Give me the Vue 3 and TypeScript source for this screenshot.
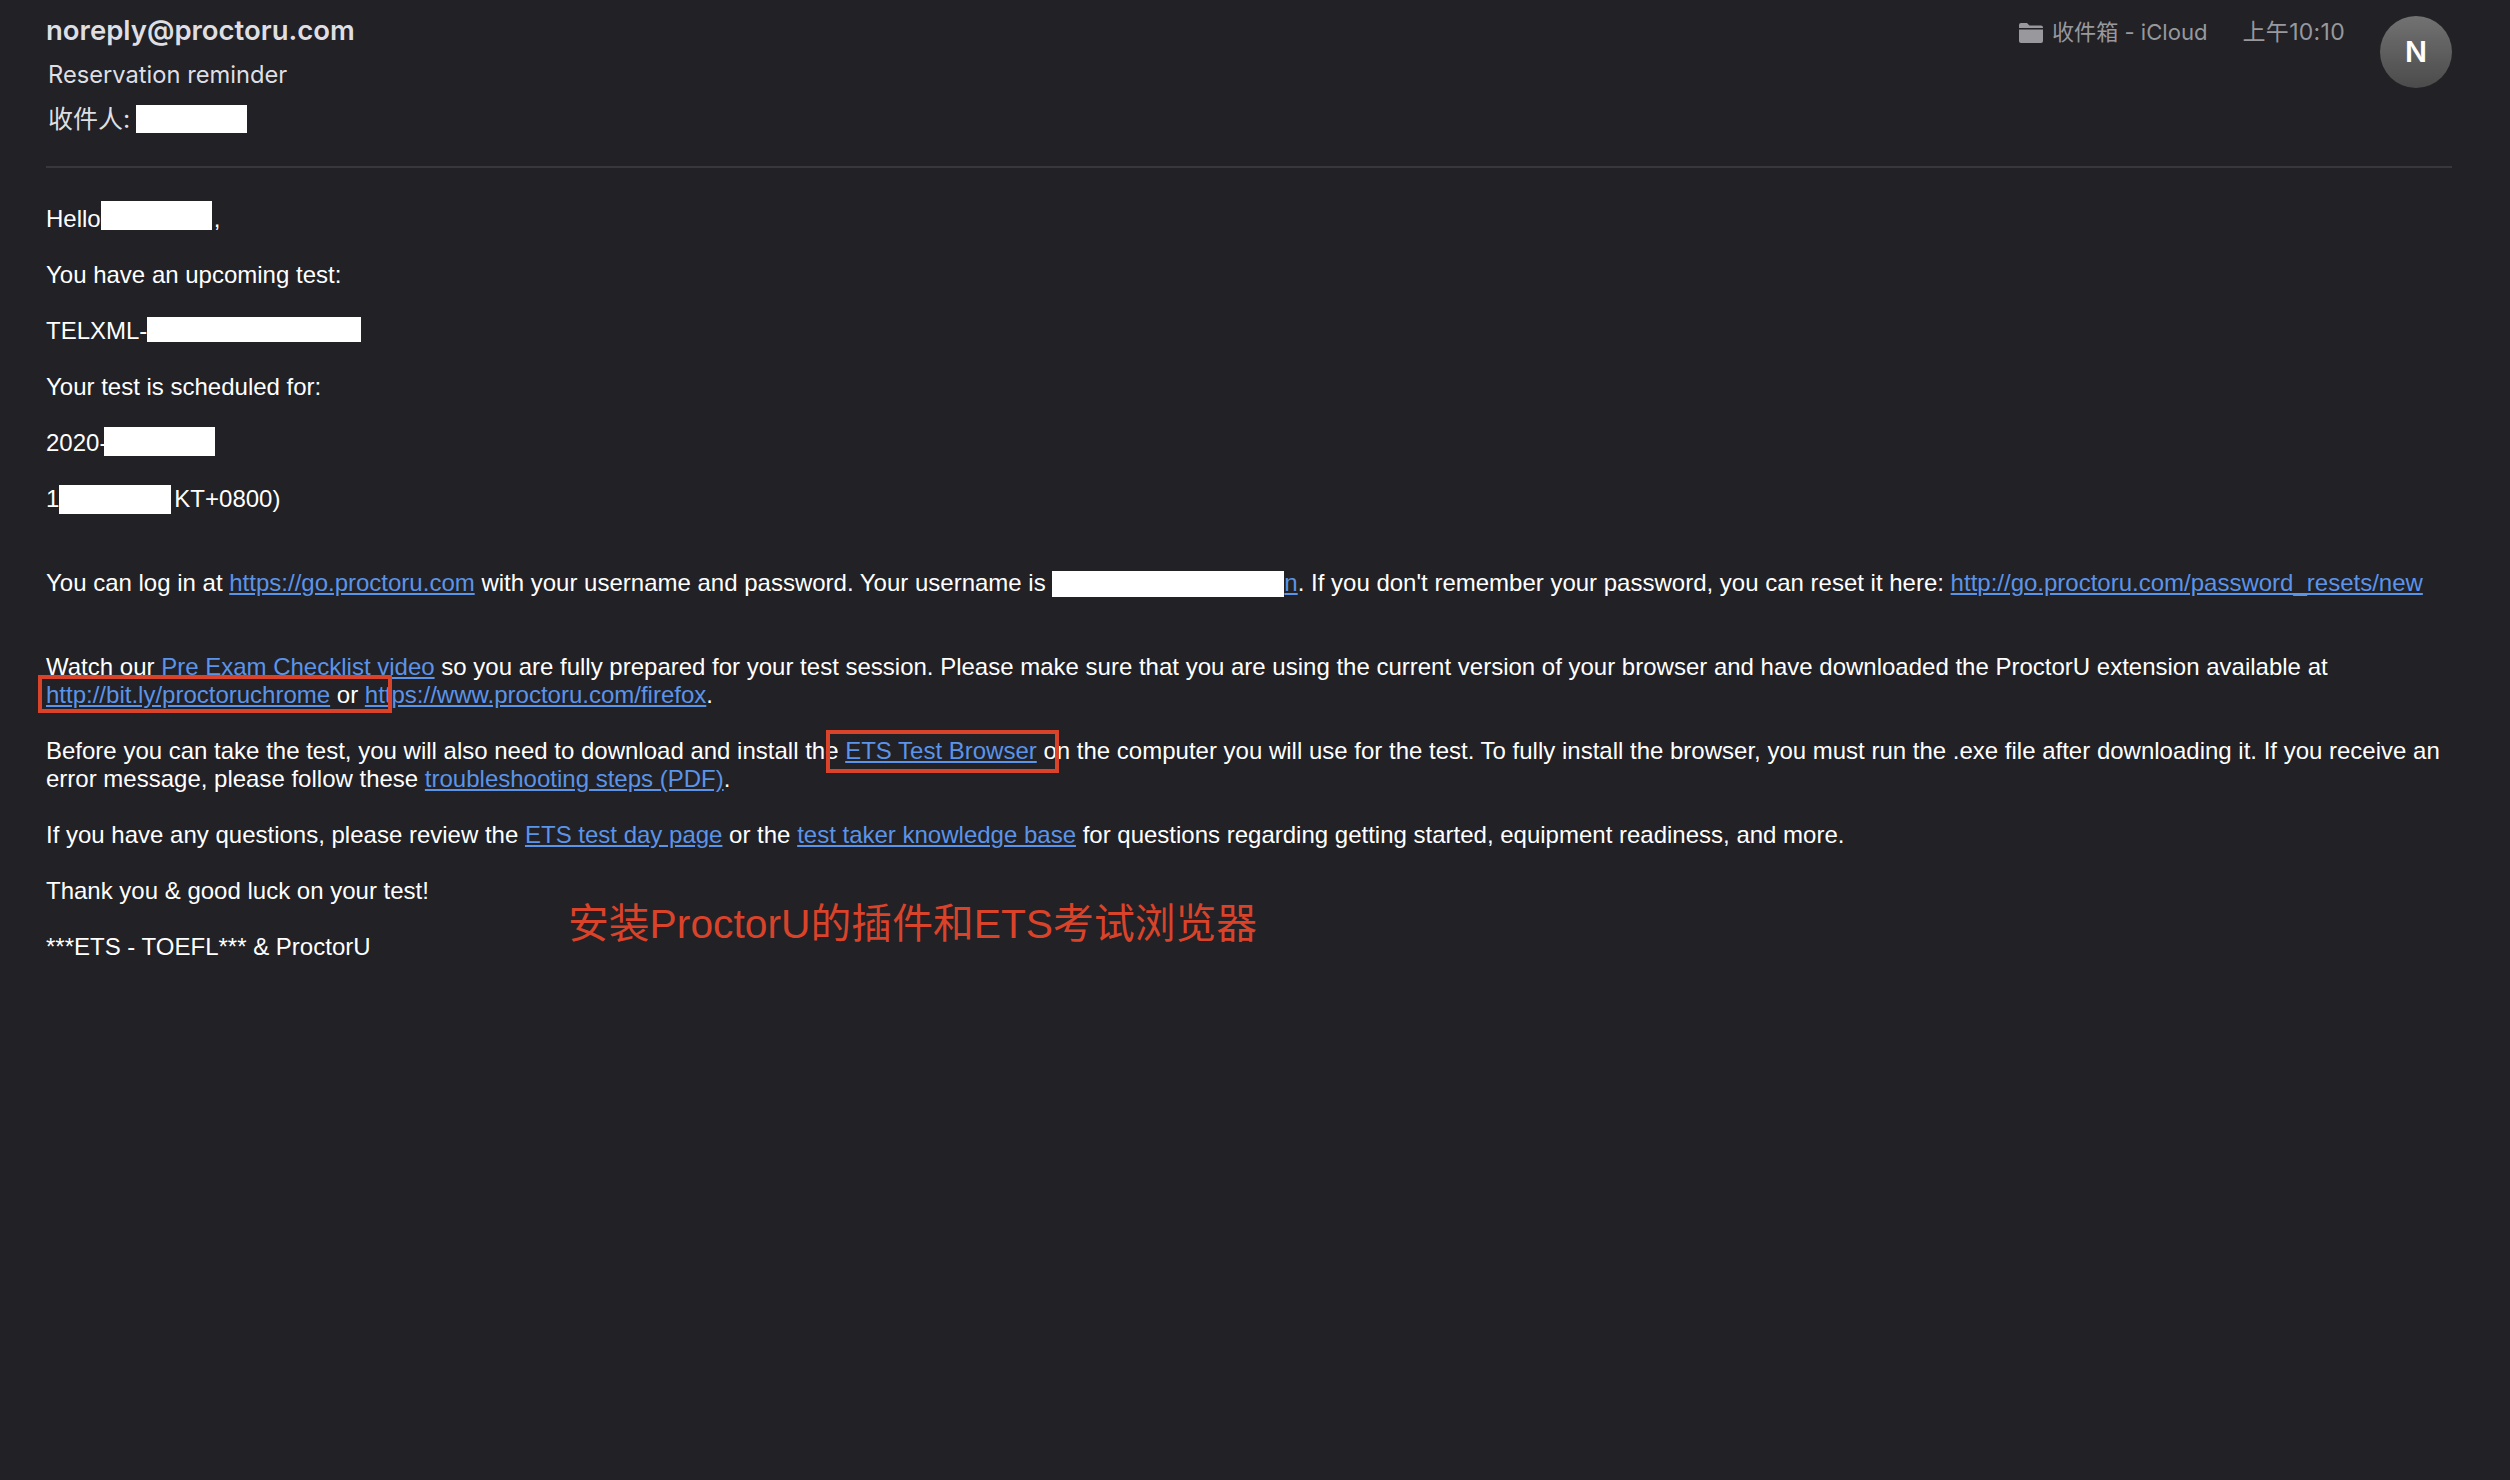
<script setup lang="ts">
const facts: string[] = ['You have an upcoming test:']
</script>

<template>
  <div class="page">
    <header class="head">
      <div class="who">
        <div class="sender">noreply@proctoru.com</div>
        <div class="subject">Reservation reminder</div>
        <div class="to">收件人: <span class="mask mask-to"></span></div>
      </div>
      <div class="meta">
        <svg class="folder" width="24" height="21" viewBox="0 0 24 21">
          <path d="M0 3a2 2 0 0 1 2-2h6l2.5 2.5H22a2 2 0 0 1 2 2V6H0z" fill="#98989d" />
          <path d="M0 7.5h24V19a2 2 0 0 1-2 2H2a2 2 0 0 1-2-2z" fill="#98989d" />
        </svg>
        <span class="box">收件箱 - iCloud</span>
        <span class="time">上午10:10</span>
        <div class="avatar">N</div>
      </div>
    </header>
    <main class="mail">
      <p>Hello<span class="mask mask-name"></span>,</p>
      <p>{{ facts[0] }}</p>
      <p>TELXML-<span class="mask mask-test"></span></p>
      <p>Your test is scheduled for:</p>
      <p>2020-<span class="mask mask-date"></span></p>
      <p class="gap">1<span class="mask mask-time"></span>KT+0800)</p>
      <p class="gap">You can log in at <a>https://go.proctoru.com</a> with your username and password. Your username is <span class="mask mask-user"></span><a>n</a>. If you don't remember your password, you can reset it here: <a>http://go.proctoru.com/password_resets/new</a></p>
      <p>Watch our <a>Pre Exam Checklist video</a> so you are fully prepared for your test session. Please make sure that you are using the current version of your browser and have downloaded the ProctorU extension available at<br /><a>http://bit.ly/proctoruchrome</a> or <a>https://www.proctoru.com/firefox</a>.</p>
      <p>Before you can take the test, you will also need to download and install the <a>ETS Test Browser</a> on the computer you will use for the test. To fully install the browser, you must run the .exe file after downloading it. If you receive an error message, please follow these <a>troubleshooting steps (PDF)</a>.</p>
      <p>If you have any questions, please review the <a>ETS test day page</a> or the <a>test taker knowledge base</a> for questions regarding getting started, equipment readiness, and more.</p>
      <p>Thank you &amp; good luck on your test!</p>
      <p>***ETS - TOEFL*** &amp; ProctorU</p>
    </main>
    <div class="mark mark-a"></div>
    <div class="mark mark-b"></div>
    <div class="note">安装ProctorU的插件和ETS考试浏览器</div>
  </div>
</template>

<style>
html, body { margin: 0; background: #212126; }
</style>

<style scoped>
.page {
  position: relative;
  box-sizing: border-box;
  width: 2510px;
  height: 1480px;
  padding: 0 58px 0 46px;
  background: #212126;
  overflow: hidden;
  font-family: "Liberation Sans", Arial, sans-serif;
}
.head {
  display: flex;
  justify-content: space-between;
  align-items: flex-start;
  height: 166px;
  border-bottom: 2px solid #38383c;
  font-family: Inter, "Noto Sans CJK SC", sans-serif;
}
.who { color: #dfdfe3; }
.sender { margin-top: 12px; font-size: 27.5px; line-height: 36px; font-weight: 600; }
.subject { margin-top: 11px; margin-left: 2px; font-size: 23.7px; line-height: 32px; }
.to { margin-top: 12px; margin-left: 2px; font-size: 25px; line-height: 32px; }
.meta { display: flex; align-items: flex-start; color: #98989d; font-size: 22.1px; line-height: 32px; }
.folder { margin-top: 22px; margin-right: 9px; }
.box { margin-top: 16px; }
.time { margin-top: 16px; margin-left: 35px; margin-right: 35px; font-size: 23px; letter-spacing: 0.3px; }
.avatar {
  width: 72px;
  height: 72px;
  margin-top: 16px;
  border-radius: 50%;
  background: linear-gradient(#727272, #4b4b4b);
  color: #fff;
  font-size: 29px;
  font-weight: 600;
  line-height: 72px;
  text-align: center;
}
.mail { padding-top: 37px; font-size: 24px; line-height: 28px; color: #fff; }
.mail p { margin: 0 0 28px; }
.mail p.gap { margin-bottom: 56px; }
.mail a { color: #5b94e8; text-decoration: underline; }
.mask {
  display: inline-block;
  margin: -4px 0;
  background: #fff;
}
.mask-to { width: 111px; height: 28px; margin-left: -1px; vertical-align: -1px; }
.mask-name { width: 111px; height: 29px; margin-right: 2px; vertical-align: 1px; }
.mask-test { width: 214px; height: 25px; vertical-align: 1px; }
.mask-date { width: 111px; height: 29px; margin-left: -3px; vertical-align: -1px; }
.mask-time { width: 112px; height: 29px; margin-right: 3px; vertical-align: -3px; }
.mask-user { width: 232px; height: 26px; vertical-align: -2px; }
.mark { position: absolute; box-sizing: border-box; border: 4px solid #d9432a; }
.mark-a { left: 38px; top: 675px; width: 354px; height: 38px; }
.mark-b { left: 826px; top: 730px; width: 233px; height: 43px; }
.note {
  position: absolute;
  left: 568px;
  top: 901px;
  font-family: "Liberation Sans", "Noto Sans CJK SC", sans-serif;
  font-size: 40.8px;
  line-height: 46px;
  color: #d9432a;
}
</style>
